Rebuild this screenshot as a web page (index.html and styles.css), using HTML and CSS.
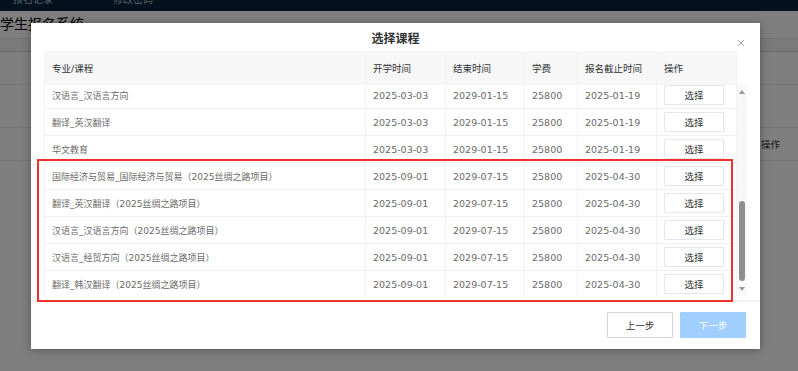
FILE: index.html
```html
<!DOCTYPE html>
<html lang="zh-CN">
<head>
    <meta charset="UTF-8">
    <title>学生报名系统</title>
    <link rel="stylesheet" href="styles.css">
</head>
<body>
    <div class="app">
        <nav class="topnav">
            <a>报名记录</a>
            <a>修改密码</a>
        </nav>
        <div class="app-title">学生报名系统</div>
        <div class="bg-table">
            <div class="bg-head"></div>
            <div class="bg-row"></div>
            <div class="bg-row tall"></div>
            <div class="bg-row"><span class="bg-op">操作</span></div>
        </div>
    </div>

    <div class="mask"></div>

    <div class="dialog">
        <div class="dialog-title">选择课程</div>
        <span class="dialog-close">
            <svg width="8" height="8" viewBox="0 0 8 8"><path d="M1 1L7 7M7 1L1 7" stroke="#a8a8a8" stroke-width="1"/></svg>
        </span>

        <div class="grid-wrap">
            <div class="grid">
                <div class="row head">
                    <div class="cell">专业/课程</div>
                    <div class="cell">开学时间</div>
                    <div class="cell">结束时间</div>
                    <div class="cell">学费</div>
                    <div class="cell">报名截止时间</div>
                    <div class="cell">操作</div>
                </div>
                <div class="grid-body">
                    <div class="grid-body-inner">
                        <div class="row">
                            <div class="cell">汉语言_汉语言方向</div>
                            <div class="cell">2025-03-03</div>
                            <div class="cell">2029-01-15</div>
                            <div class="cell">25800</div>
                            <div class="cell">2025-01-19</div>
                            <div class="cell"><button class="btn-pick">选择</button></div>
                        </div>
                        <div class="row">
                            <div class="cell">翻译_英汉翻译</div>
                            <div class="cell">2025-03-03</div>
                            <div class="cell">2029-01-15</div>
                            <div class="cell">25800</div>
                            <div class="cell">2025-01-19</div>
                            <div class="cell"><button class="btn-pick">选择</button></div>
                        </div>
                        <div class="row">
                            <div class="cell">华文教育</div>
                            <div class="cell">2025-03-03</div>
                            <div class="cell">2029-01-15</div>
                            <div class="cell">25800</div>
                            <div class="cell">2025-01-19</div>
                            <div class="cell"><button class="btn-pick">选择</button></div>
                        </div>
                        <div class="row">
                            <div class="cell">国际经济与贸易_国际经济与贸易（2025丝绸之路项目）</div>
                            <div class="cell">2025-09-01</div>
                            <div class="cell">2029-07-15</div>
                            <div class="cell">25800</div>
                            <div class="cell">2025-04-30</div>
                            <div class="cell"><button class="btn-pick">选择</button></div>
                        </div>
                        <div class="row">
                            <div class="cell">翻译_英汉翻译（2025丝绸之路项目）</div>
                            <div class="cell">2025-09-01</div>
                            <div class="cell">2029-07-15</div>
                            <div class="cell">25800</div>
                            <div class="cell">2025-04-30</div>
                            <div class="cell"><button class="btn-pick">选择</button></div>
                        </div>
                        <div class="row">
                            <div class="cell">汉语言_汉语言方向（2025丝绸之路项目）</div>
                            <div class="cell">2025-09-01</div>
                            <div class="cell">2029-07-15</div>
                            <div class="cell">25800</div>
                            <div class="cell">2025-04-30</div>
                            <div class="cell"><button class="btn-pick">选择</button></div>
                        </div>
                        <div class="row">
                            <div class="cell">汉语言_经贸方向（2025丝绸之路项目）</div>
                            <div class="cell">2025-09-01</div>
                            <div class="cell">2029-07-15</div>
                            <div class="cell">25800</div>
                            <div class="cell">2025-04-30</div>
                            <div class="cell"><button class="btn-pick">选择</button></div>
                        </div>
                        <div class="row">
                            <div class="cell">翻译_韩汉翻译（2025丝绸之路项目）</div>
                            <div class="cell">2025-09-01</div>
                            <div class="cell">2029-07-15</div>
                            <div class="cell">25800</div>
                            <div class="cell">2025-04-30</div>
                            <div class="cell"><button class="btn-pick">选择</button></div>
                        </div>
                    </div>
                </div>
            </div>

            <div class="vbar">
                <div class="vbar-gutter"></div>
                <div class="vbar-arrow">
                    <svg width="6" height="4" viewBox="0 0 6 4"><path d="M3 0L6 4H0Z" fill="#9a9a9a"/></svg>
                </div>
                <div class="vbar-track"><div class="vbar-thumb"></div></div>
                <div class="vbar-arrow">
                    <svg width="6" height="4" viewBox="0 0 6 4"><path d="M0 0H6L3 4Z" fill="#9a9a9a"/></svg>
                </div>
            </div>
        </div>

        <div class="dialog-footer">
            <button class="btn">上一步</button>
            <button class="btn btn-primary">下一步</button>
        </div>

        <div class="mark"></div>
    </div>
</body>
</html>
```

FILE: styles.css
```css
body {
    margin: 0;
    width: 798px;
    height: 371px;
    overflow: hidden;
    position: relative;
    background-color: #fff;
    font-family: "DejaVu Sans", "Noto Sans CJK SC", sans-serif;
    color: #333;
}

/* page behind the dialog */
.topnav {
    height: 11px;
    background-color: #08243e;
    display: flex;
    align-items: flex-start;
    gap: 60px;
    padding-left: 13px;
    overflow: hidden;
}

.topnav a {
    display: block;
    margin-top: -7px;
    font-family: "Noto Sans CJK SC", sans-serif;
    font-size: 10px;
    line-height: 12px;
    color: #b4c2d2;
}

.app-title {
    height: 27px;
    line-height: 25px;
    font-family: "Noto Sans CJK SC", sans-serif;
    font-size: 14px;
    color: #000;
}

.bg-head {
    height: 12px;
    border-top: 1px solid #e6e6e6;
    border-bottom: 1px solid #d0d0d0;
    background-color: #f4f4f4;
}

.bg-row {
    height: 32px;
    border-bottom: 1px solid #e8e8e8;
    display: flex;
    align-items: center;
    justify-content: flex-end;
}

.bg-row.tall {
    height: 42px;
}

.bg-op {
    width: 37px;
    font-family: "Noto Sans CJK SC", sans-serif;
    font-size: 9.5px;
    color: #333;
}

.mask {
    position: absolute;
    inset: 0;
    background-color: rgba(0, 0, 0, 0.5);
}

/* dialog */
.dialog {
    position: absolute;
    left: 31px;
    top: 23px;
    width: 729px;
    height: 326px;
    background-color: #fff;
    box-shadow: 0 1px 8px rgba(0, 0, 0, 0.35);
    display: flex;
    flex-direction: column;
}

.dialog-title {
    height: 28px;
    line-height: 30px;
    text-align: center;
    font-family: "Noto Sans CJK SC", sans-serif;
    font-size: 12px;
    font-weight: 700;
    color: #303133;
}

.dialog-close {
    position: absolute;
    right: 15px;
    top: 16px;
    width: 8px;
    height: 8px;
    display: flex;
}

.grid-wrap {
    display: flex;
    height: 245px;
    margin: 0 13px;
}

.grid {
    width: 693px;
}

.row {
    display: grid;
    grid-template-columns: 322px 80px 79px 53px 79px 80px;
    height: 27px;
    box-sizing: border-box;
    border-bottom: 1px solid #eef0f2;
    font-size: 9.5px;
    color: #6a6a6a;
}

.row .cell {
    display: flex;
    align-items: center;
    padding-left: 7px;
    box-sizing: border-box;
    border-right: 1px solid #f2f3f5;
    white-space: nowrap;
    overflow: hidden;
}

.row .cell:first-child {
    border-left: 1px solid #f2f3f5;
    font-size: 9px;
}

.row.head {
    height: 34px;
    background-color: #f7f7f8;
    color: #303133;
    border-bottom: none;
}

.row.head .cell {
    font-size: 9.5px;
}

.grid-body {
    height: 211px;
    overflow: hidden;
}

.grid-body-inner {
    margin-top: -3px;
}

.btn-pick {
    width: 60px;
    height: 20px;
    padding: 0;
    background-color: #fff;
    border: 1px solid #e4e6ea;
    border-radius: 1px;
    font-family: "Noto Sans CJK SC", sans-serif;
    font-size: 9.5px;
    color: #333;
}

/* fake vertical scrollbar */
.vbar {
    width: 10px;
    display: flex;
    flex-direction: column;
}

.vbar-gutter {
    height: 34px;
    background-color: #fff;
}

.vbar-arrow {
    height: 14px;
    display: flex;
    align-items: center;
    justify-content: center;
    background-color: #f8f8f9;
}

.vbar-track {
    height: 183px;
    background-color: #f8f8f9;
}

.vbar-thumb {
    width: 6px;
    height: 80px;
    margin: 102px auto 0;
    border-radius: 3px;
    background-color: #8e8e8e;
}

.dialog-footer {
    margin-top: 4px;
    border-top: 2px solid #f0f0f0;
    padding: 10px 14px 0 0;
    display: flex;
    justify-content: flex-end;
    gap: 7px;
}

.btn {
    width: 66px;
    height: 26px;
    padding: 0;
    background-color: #fff;
    border: 1px solid #d4d4d4;
    border-radius: 1px;
    font-family: "Noto Sans CJK SC", sans-serif;
    font-size: 9.5px;
    color: #333;
}

.btn-primary {
    background-color: #a0cfff;
    border-color: #a0cfff;
    color: #fff;
}

/* red highlight drawn over the rows */
.mark {
    position: absolute;
    left: 6px;
    top: 136px;
    width: 696px;
    height: 143px;
    box-sizing: border-box;
    border: 2px solid #f0302c;
    pointer-events: none;
}
```
